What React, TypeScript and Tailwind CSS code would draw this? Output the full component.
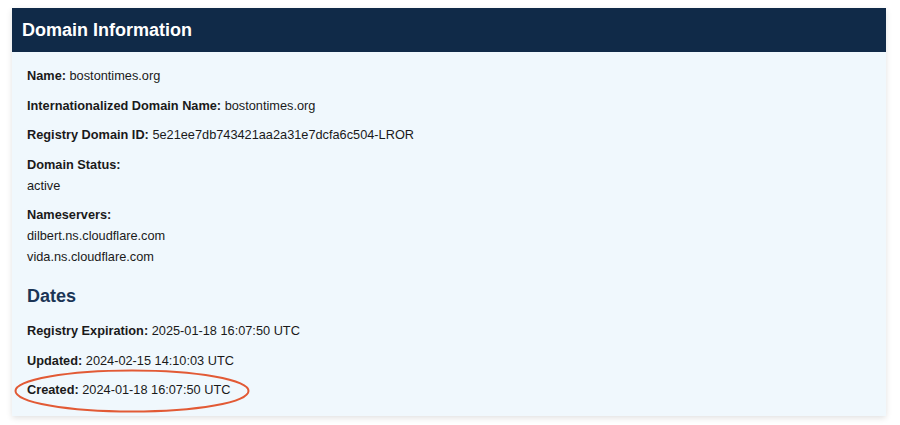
const info = [
  { label: 'Name:', value: 'bostontimes.org' },
  { label: 'Internationalized Domain Name:', value: 'bostontimes.org' },
  { label: 'Registry Domain ID:', value: '5e21ee7db743421aa2a31e7dcfa6c504-LROR' },
];

const dates = [
  { label: 'Registry Expiration:', value: '2025-01-18 16:07:50 UTC' },
  { label: 'Updated:', value: '2024-02-15 14:10:03 UTC' },
];

export default function App() {
  return (
    <div className="min-h-[425px] bg-white pt-[8px] pl-[12px] font-['Liberation_Sans',Arial,sans-serif]">
      <div className="w-[874px] bg-[#f0f8fd] shadow-[0_2px_6px_rgba(0,0,0,0.12)]">
        <div className="h-[44px] bg-[#102a48] px-[10px] flex items-center">
          <h1 className="text-[18px] font-bold text-white">Domain Information</h1>
        </div>

        <div className="px-[15px] pt-[13px] pb-[15.5px] text-[12.75px] leading-[21px] text-[#1a1a1a]">
          {info.map((row) => (
            <p key={row.label} className="mb-[8.5px]">
              <span className="font-bold">{row.label}</span> {row.value}
            </p>
          ))}

          <div className="mb-[8.5px]">
            <p className="font-bold">Domain Status:</p>
            <p>active</p>
          </div>

          <div>
            <p className="font-bold">Nameservers:</p>
            <p>dilbert.ns.cloudflare.com</p>
            <p>vida.ns.cloudflare.com</p>
          </div>

          <h2 className="mt-[17.5px] mb-[13.5px] text-[18px] leading-[22px] font-bold text-[#1b3556]">Dates</h2>

          {dates.map((row) => (
            <p key={row.label} className="mb-[8.5px]">
              <span className="font-bold">{row.label}</span> {row.value}
            </p>
          ))}

          <p className="relative">
            <span className="font-bold">Created:</span> 2024-01-18 16:07:50 UTC
            {/* Annotation circle */}
            <svg className="absolute left-[-13px] top-[-10px]" width="236" height="44" viewBox="0 0 236 44">
              <ellipse cx="118" cy="22" rx="116.5" ry="20.5" fill="none" stroke="#e25a35" strokeWidth="2" />
            </svg>
          </p>
        </div>
      </div>
    </div>
  );
}
